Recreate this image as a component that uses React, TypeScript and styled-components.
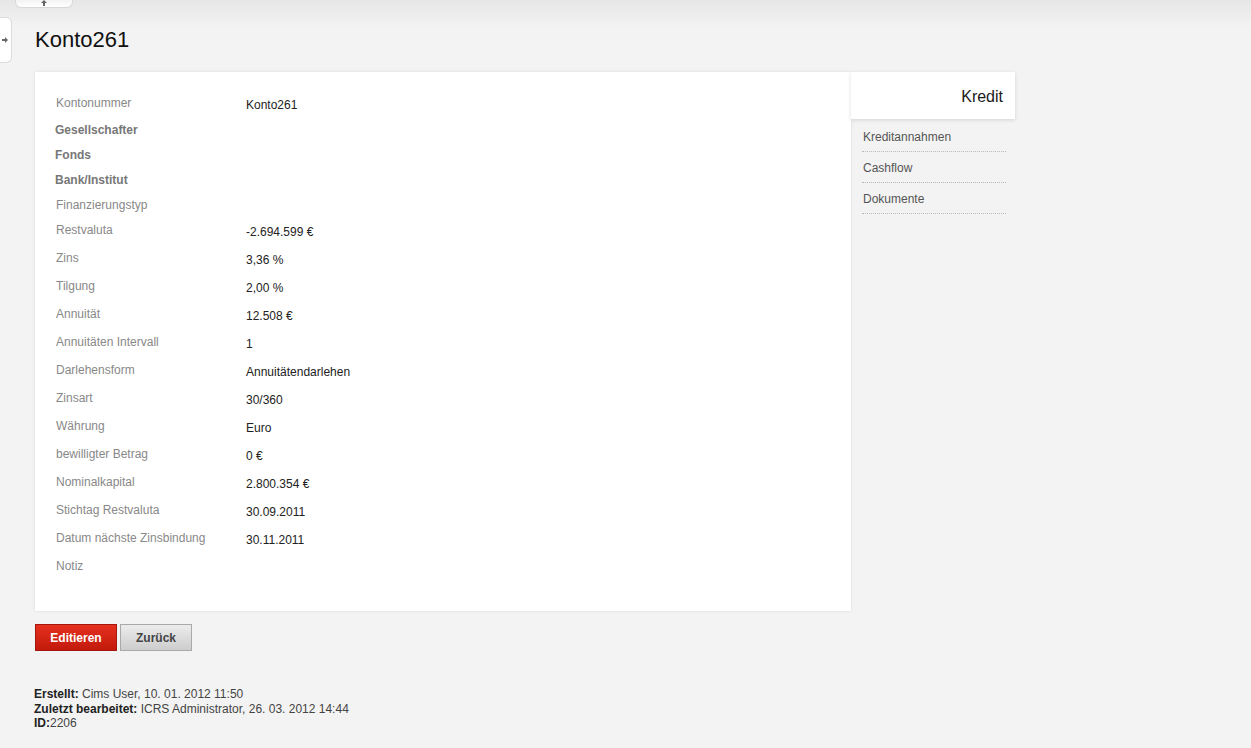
import styled, { createGlobalStyle } from 'styled-components';

const GlobalStyle = createGlobalStyle`
  html, body {
    margin: 0;
    padding: 0;
  }
  body {
    background: linear-gradient(to bottom, #e6e6e6 0px, #f3f3f3 28px, #f3f3f3 100%);
    background-color: #f3f3f3;
    font-family: "Liberation Sans", Arial, sans-serif;
    font-size: 12px;
    color: #222;
    min-height: 748px;
  }
`;

interface Field {
  label: string;
  value?: string;
  strong?: boolean;
}

const fields: Field[] = [
  { label: 'Kontonummer', value: 'Konto261' },
  { label: 'Gesellschafter', strong: true },
  { label: 'Fonds', strong: true },
  { label: 'Bank/Institut', strong: true },
  { label: 'Finanzierungstyp' },
  { label: 'Restvaluta', value: '-2.694.599 €' },
  { label: 'Zins', value: '3,36 %' },
  { label: 'Tilgung', value: '2,00 %' },
  { label: 'Annuität', value: '12.508 €' },
  { label: 'Annuitäten Intervall', value: '1' },
  { label: 'Darlehensform', value: 'Annuitätendarlehen' },
  { label: 'Zinsart', value: '30/360' },
  { label: 'Währung', value: 'Euro' },
  { label: 'bewilligter Betrag', value: '0 €' },
  { label: 'Nominalkapital', value: '2.800.354 €' },
  { label: 'Stichtag Restvaluta', value: '30.09.2011' },
  { label: 'Datum nächste Zinsbindung', value: '30.11.2011' },
  { label: 'Notiz' },
];

const links = ['Kreditannahmen', 'Cashflow', 'Dokumente'];

function App() {
  return (
    <>
      <GlobalStyle />
      <TopHandle>
        <ArrowUp />
      </TopHandle>
      <SideHandle>
        <ArrowRight />
      </SideHandle>
      <Page>
        <Title>Konto261</Title>
        <Layout>
          <Card>
            {fields.map((f) => (
              <Row key={f.label} $tall={!!f.value}>
                <Label $strong={f.strong}>{f.label}</Label>
                {f.value && <Value>{f.value}</Value>}
              </Row>
            ))}
          </Card>
          <Side>
            <SideTab>Kredit</SideTab>
            <SideNav>
              {links.map((l) => (
                <SideLink key={l}>{l}</SideLink>
              ))}
            </SideNav>
          </Side>
        </Layout>
        <Buttons>
          <Button $primary>Editieren</Button>
          <Button>Zurück</Button>
        </Buttons>
        <Meta>
          <div>
            <b>Erstellt:</b> Cims User, 10. 01. 2012 11:50
          </div>
          <div>
            <b>Zuletzt bearbeitet:</b> ICRS Administrator, 26. 03. 2012 14:44
          </div>
          <div>
            <b>ID:</b>2206
          </div>
        </Meta>
      </Page>
    </>
  );
}
export default App;

const TopHandle = styled.div`
  position: absolute;
  top: -1px;
  left: 15px;
  width: 56px;
  height: 8px;
  background: linear-gradient(to bottom, #f2f2f2, #ffffff);
  border: 1px solid #d8d8d8;
  border-top: none;
  border-radius: 0 0 6px 6px;
  display: flex;
  justify-content: center;
  align-items: flex-start;
`;
const ArrowUp = styled.span`
  display: block;
  width: 0;
  height: 0;
  margin-top: 1px;
  border-left: 3px solid transparent;
  border-right: 3px solid transparent;
  border-bottom: 3px solid #666;
  position: relative;
  &::after {
    content: '';
    position: absolute;
    left: -1px;
    top: 3px;
    width: 2px;
    height: 3px;
    background: #666;
  }
`;
const SideHandle = styled.div`
  position: absolute;
  top: 17px;
  left: -1px;
  width: 12px;
  height: 44px;
  background: #ffffff;
  border: 1px solid #dcdcdc;
  border-left: none;
  border-radius: 0 6px 6px 0;
  display: flex;
  align-items: center;
  justify-content: center;
`;
const ArrowRight = styled.span`
  display: block;
  width: 0;
  height: 0;
  margin-left: 3px;
  border-top: 3px solid transparent;
  border-bottom: 3px solid transparent;
  border-left: 3px solid #666;
  position: relative;
  &::before {
    content: '';
    position: absolute;
    left: -6px;
    top: -1px;
    width: 3px;
    height: 2px;
    background: #666;
  }
`;
const Page = styled.div`
  padding-left: 35px;
  padding-top: 25px;
`;
const Title = styled.h1`
  margin: 0 0 17px 0;
  font-size: 22px;
  line-height: 30px;
  font-weight: normal;
  color: #111;
`;
const Layout = styled.div`
  display: flex;
  align-items: flex-start;
`;
const Card = styled.div`
  width: 795px;
  padding: 19px 0 32px 21px;
  background: #ffffff;
  box-shadow: 0 0 3px rgba(0, 0, 0, 0.1);
`;
const Row = styled.div<{ $tall: boolean }>`
  display: flex;
  height: ${(p) => (p.$tall ? '28px' : '25px')};
  &:first-child {
    height: 27px;
  }
`;
const Label = styled.div<{ $strong?: boolean }>`
  width: 190px;
  line-height: 25px;
  color: ${(p) => (p.$strong ? '#777' : '#888')};
  font-weight: ${(p) => (p.$strong ? 'bold' : 'normal')};
  margin-left: ${(p) => (p.$strong ? '-1px' : '0')};
  padding-right: ${(p) => (p.$strong ? '1px' : '0')};
`;
const Value = styled.div`
  padding-top: 2px;
  line-height: 25px;
  color: #222;
`;
const Side = styled.div`
  width: 164px;
`;
const SideTab = styled.div`
  height: 47px;
  background: #ffffff;
  box-shadow: 0 1px 4px rgba(0, 0, 0, 0.13);
  text-align: right;
  padding-right: 12px;
  font-size: 16px;
  line-height: 50px;
  color: #1a1a1a;
`;
const SideNav = styled.div`
  padding: 2px 9px 0 11px;
`;
const SideLink = styled.div`
  height: 30px;
  line-height: 32px;
  border-bottom: 1px dotted #bbb;
  color: #555;
  padding-left: 1px;
`;
const Buttons = styled.div`
  display: flex;
  gap: 3px;
  margin-top: 13px;
`;
const Button = styled.button<{ $primary?: boolean }>`
  height: 27px;
  padding: 0;
  width: ${(p) => (p.$primary ? '82px' : '72px')};
  font-family: "Liberation Sans", Arial, sans-serif;
  font-size: 12px;
  font-weight: bold;
  cursor: pointer;
  color: ${(p) => (p.$primary ? '#ffffff' : '#444')};
  background: ${(p) =>
    p.$primary
      ? 'linear-gradient(to bottom, #e5301f, #c21a0c)'
      : 'linear-gradient(to bottom, #ececec, #cdcdcd)'};
  border: 1px solid ${(p) => (p.$primary ? '#a3170d' : '#a9a9a9')};
`;
const Meta = styled.div`
  margin-top: 36px;
  margin-left: -1px;
  font-size: 12px;
  line-height: 14.5px;
  color: #444;
  b {
    color: #222;
  }
`;
